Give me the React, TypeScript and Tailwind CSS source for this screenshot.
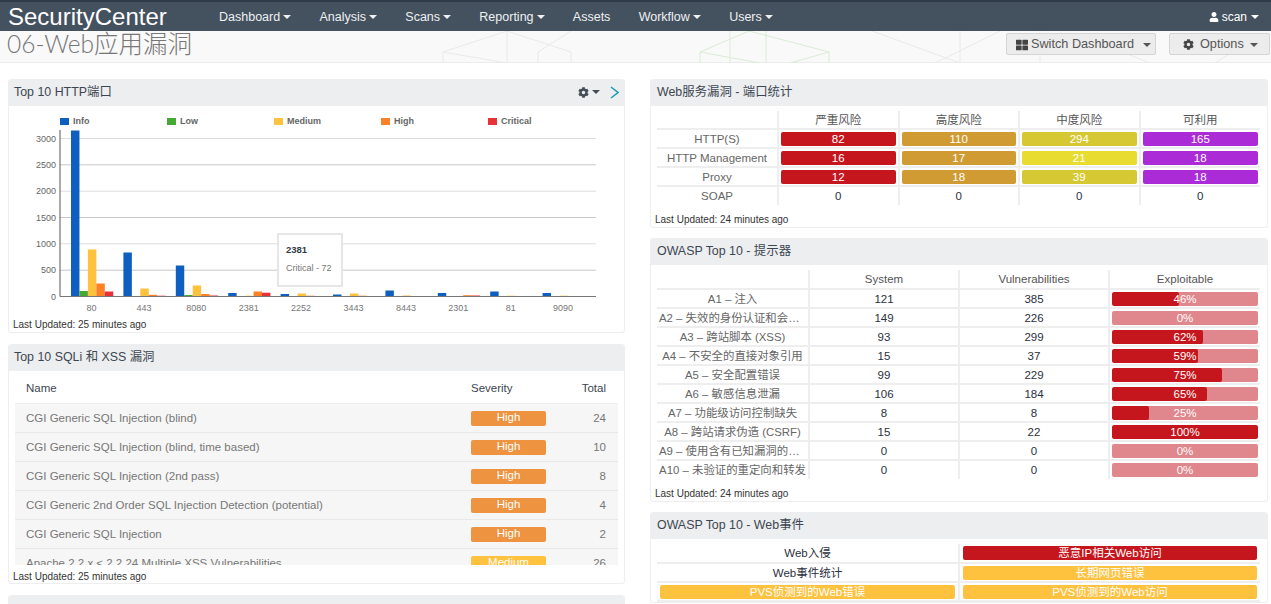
import type { ReactNode } from "react";
import { FaCog, FaThLarge, FaUser } from "react-icons/fa";

const navItems = [
  { label: "Dashboard", caret: true },
  { label: "Analysis", caret: true },
  { label: "Scans", caret: true },
  { label: "Reporting", caret: true },
  { label: "Assets", caret: false },
  { label: "Workflow", caret: true },
  { label: "Users", caret: true },
];

const seriesColors = ["#0f5fc0", "#46a935", "#fec23f", "#fd8127", "#e8323a"];
const legend = ["Info", "Low", "Medium", "High", "Critical"];
const legendX = [60, 167, 274, 381, 488];
const yTicks = ["3000", "2500", "2000", "1500", "1000", "500", "0"];
const tickY = [138.5, 164.8, 191.2, 217.5, 243.8, 270.2, 296.5];

// bar heights in px, order matches the legend
const ports = [
  { port: "80", bars: [166, 5.5, 47, 13, 5] },
  { port: "443", bars: [44, 0, 8, 1.7, 0.8] },
  { port: "8080", bars: [31, 1.5, 11, 2.5, 1] },
  { port: "2381", bars: [3.5, 0.5, 0.8, 5, 3.8] },
  { port: "2252", bars: [2.5, 0, 3, 0.8, 0.3] },
  { port: "3443", bars: [2, 0, 3, 0.8, 0.5] },
  { port: "8443", bars: [6, 0, 1, 0, 0] },
  { port: "2301", bars: [3.5, 0, 0, 1.3, 1] },
  { port: "81", bars: [5, 0, 0.8, 0, 0] },
  { port: "9090", bars: [3.5, 0, 0.8, 0, 0] },
];

const serviceRows = [
  { name: "HTTP(S)", cells: ["82", "110", "294", "165"], medium: "bg-[#d6c832]" },
  { name: "HTTP Management", cells: ["16", "17", "21", "18"], medium: "bg-[#e8dc30]" },
  { name: "Proxy", cells: ["12", "18", "39", "18"], medium: "bg-[#d6c832]" },
];

const owaspRows = [
  { name: "A1 – 注入", system: 121, vulns: 385, pct: 46 },
  { name: "A2 – 失效的身份认证和会话管理", system: 149, vulns: 226, pct: 0 },
  { name: "A3 – 跨站脚本 (XSS)", system: 93, vulns: 299, pct: 62 },
  { name: "A4 – 不安全的直接对象引用", system: 15, vulns: 37, pct: 59 },
  { name: "A5 – 安全配置错误", system: 99, vulns: 229, pct: 75 },
  { name: "A6 – 敏感信息泄漏", system: 106, vulns: 184, pct: 65 },
  { name: "A7 – 功能级访问控制缺失", system: 8, vulns: 8, pct: 25 },
  { name: "A8 – 跨站请求伪造 (CSRF)", system: 15, vulns: 22, pct: 100 },
  { name: "A9 – 使用含有已知漏洞的组件", system: 0, vulns: 0, pct: 0 },
  { name: "A10 – 未验证的重定向和转发", system: 0, vulns: 0, pct: 0 },
];

const sqlRows = [
  { name: "CGI Generic SQL Injection (blind)", severity: "High", total: 24 },
  { name: "CGI Generic SQL Injection (blind, time based)", severity: "High", total: 10 },
  { name: "CGI Generic SQL Injection (2nd pass)", severity: "High", total: 8 },
  { name: "CGI Generic 2nd Order SQL Injection Detection (potential)", severity: "High", total: 4 },
  { name: "CGI Generic SQL Injection", severity: "High", total: 2 },
  { name: "Apache 2.2.x < 2.2.24 Multiple XSS Vulnerabilities", severity: "Medium", total: 26 },
];

function Caret({ className }: { className: string }) {
  return <span className={`inline-block h-0 w-0 border-x-[4px] border-t-[4px] border-x-transparent ${className}`} />;
}

function Panel({ title, action, children, right }: { title: string; action?: ReactNode; children?: ReactNode; right?: boolean }) {
  return (
    <section className="rounded-[3px] border-x border-b border-[#eeeeee] bg-white">
      <div
        className={`flex h-[27px] items-center justify-between rounded-t-[3px] bg-[#eceef0] pb-px pr-[5px] text-[12.4px] text-[#3d4650] ${
          right ? "pl-[6px]" : "pl-[5px]"
        }`}
      >
        <span>{title}</span>
        {action}
      </div>
      {children}
    </section>
  );
}

function Updated({ minutes, className }: { minutes: number; className: string }) {
  return <p className={`text-[10px] leading-none text-[#333333] ${className}`}>Last Updated: {minutes} minutes ago</p>;
}

function Pill({ color, children }: { color: string; children: ReactNode }) {
  return (
    <div className={`flex h-[14px] items-center justify-center rounded-[2px] text-[11.5px] leading-[14px] text-white ${color}`}>
      {children}
    </div>
  );
}

function PortChart() {
  return (
    <div className="relative h-[207px]">
      <svg width="615" height="207" viewBox="9 106 615 207" className="block">
        {legend.map((name, i) => (
          <g key={name}>
            <rect x={legendX[i]} y={118} width={9} height={7} fill={seriesColors[i]} />
            <text x={legendX[i] + 13} y={124} fontSize="9" fontWeight="700" fill="#666666">
              {name}
            </text>
          </g>
        ))}
        {yTicks.map((tick, i) => (
          <g key={tick}>
            {i < 6 && <line x1={60} x2={596} y1={tickY[i]} y2={tickY[i]} stroke={i % 2 === 0 ? "#dddddd" : "#c8c8c8"} />}
            <text x={56} y={tickY[i] + 3} fontSize="9" fill="#666666" textAnchor="end">
              {tick}
            </text>
          </g>
        ))}
        {ports.map((group, g) => (
          <g key={group.port}>
            {group.bars.map((h, s) =>
              h > 0 ? (
                <rect key={s} x={71 + 52.4 * g + 8.45 * s} y={296.5 - h} width={8.45} height={h} fill={seriesColors[s]} />
              ) : null
            )}
            <text x={91.5 + 52.4 * g} y={311} fontSize="9" fill="#777777" textAnchor="middle">
              {group.port}
            </text>
          </g>
        ))}
        <line x1={60} x2={60} y1={130} y2={296.5} stroke="#555555" />
        <line x1={60} x2={596} y1={296.5} y2={296.5} stroke="#777777" />
      </svg>
      <div className="absolute left-[268px] top-[127px] h-[54px] w-[66px] border-2 border-[#e6e6e6] bg-white pl-[7px] pt-[10px]">
        <p className="text-[9.5px] font-bold leading-none text-[#333d47]">2381</p>
        <p className="mt-[9px] text-[9px] leading-none text-[#777777]">Critical - 72</p>
      </div>
    </div>
  );
}

function ServiceTable() {
  const th = "h-[18px] border-l-2 border-[#eeeeee] text-center text-[11.5px] font-normal leading-[14px] text-[#555555]";
  const td = "h-[19px] border-l-2 border-t-2 border-[#eeeeee] px-[2px] text-center text-[11.5px] leading-[14px] text-[#2b3040]";
  const label = "h-[19px] border-t-2 border-[#eeeeee] text-center text-[11.5px] leading-[14px] text-[#666666]";
  return (
    <table className="ml-[6px] mt-[5px] w-[603px] table-fixed">
      <thead>
        <tr>
          <th className="h-[18px] w-[121px]" />
          <th className={th}>严重风险</th>
          <th className={th}>高度风险</th>
          <th className={th}>中度风险</th>
          <th className={th}>可利用</th>
        </tr>
      </thead>
      <tbody>
        {serviceRows.map((row) => (
          <tr key={row.name}>
            <td className={label}>{row.name}</td>
            <td className={td}><Pill color="bg-[#c5161d]">{row.cells[0]}</Pill></td>
            <td className={td}><Pill color="bg-[#d09b33]">{row.cells[1]}</Pill></td>
            <td className={td}><Pill color={row.medium}>{row.cells[2]}</Pill></td>
            <td className={td}><Pill color="bg-[#ab2bd6]">{row.cells[3]}</Pill></td>
          </tr>
        ))}
        <tr>
          <td className={label}>SOAP</td>
          {[0, 1, 2, 3].map((i) => (
            <td key={i} className={td}>0</td>
          ))}
        </tr>
      </tbody>
    </table>
  );
}

function OwaspTable() {
  const th = "h-[19px] border-l-2 border-[#eeeeee] text-center text-[11.5px] font-normal leading-[14px] text-[#555555]";
  const td = "h-[19px] border-l-2 border-t-2 border-[#eeeeee] text-center text-[11.5px] leading-[14px] text-[#2b3040]";
  return (
    <table className="ml-[6px] mt-[5px] w-[603px] table-fixed">
      <thead>
        <tr>
          <th className="h-[19px] w-[152px]" />
          <th className={`${th} w-[150px]`}>System</th>
          <th className={`${th} w-[150px]`}>Vulnerabilities</th>
          <th className={th}>Exploitable</th>
        </tr>
      </thead>
      <tbody>
        {owaspRows.map((row) => (
          <tr key={row.name}>
            <td className="h-[19px] max-w-0 truncate border-t-2 border-[#eeeeee] px-[2px] text-center text-[11.4px] leading-[14px] text-[#666666]">
              {row.name}
            </td>
            <td className={td}>{row.system}</td>
            <td className={td}>{row.vulns}</td>
            <td className={`${td} px-[2px]`}>
              <div className="relative h-[14px] overflow-hidden rounded-[2px] bg-[#e0868d]">
                <div className="h-full rounded-[2px] bg-[#c5161d]" style={{ width: `${row.pct}%` }} />
                <span className="absolute inset-0 text-center text-[11.5px] leading-[14px] text-white">{row.pct}%</span>
              </div>
            </td>
          </tr>
        ))}
      </tbody>
    </table>
  );
}

function SqlTable() {
  return (
    <div className="mx-[6px] h-[194px] overflow-hidden">
      <div className="grid h-[33px] grid-cols-[456px_75px_72px] items-center border-b border-[#eeeeee] pt-[3px] text-[11.5px] text-[#3d4650]">
        <span className="pl-[11px]">Name</span>
        <span>Severity</span>
        <span className="pr-[12px] text-right">Total</span>
      </div>
      {sqlRows.map((row) => (
        <div
          key={row.name}
          className="grid h-[29px] grid-cols-[456px_75px_72px] items-center border-b border-[#e8e8e8] bg-[#f6f6f6] text-[11.5px] text-[#777777]"
        >
          <span className="pl-[11px] pt-px">{row.name}</span>
          <span
            className={`flex h-[15px] items-center justify-center rounded-[2px] text-[11.5px] text-white ${
              row.severity === "High" ? "bg-[#ee9340]" : "bg-[#fec23f]"
            }`}
          >
            {row.severity}
          </span>
          <span className="pr-[12px] pt-px text-right">{row.total}</span>
        </div>
      ))}
    </div>
  );
}

function WebEvents() {
  const cell = "h-[19px] border-b-2 border-[#eeeeee] px-[3px] text-center text-[11.5px] leading-[14px] text-[#2b3040]";
  return (
    <table className="ml-[6px] mt-[5px] w-[603px] table-fixed">
      <tbody>
        <tr>
          <td className={`${cell} w-[302px]`}>Web入侵</td>
          <td className={`${cell} border-l-2`}><Pill color="bg-[#c5161d]">恶意IP相关Web访问</Pill></td>
        </tr>
        <tr>
          <td className={cell}>Web事件统计</td>
          <td className={`${cell} border-l-2`}><Pill color="bg-[#fec23f]">长期网页错误</Pill></td>
        </tr>
        <tr>
          <td className={cell}><Pill color="bg-[#fec23f]">PVS侦测到的Web错误</Pill></td>
          <td className={`${cell} border-l-2`}><Pill color="bg-[#fec23f]">PVS侦测到的Web访问</Pill></td>
        </tr>
      </tbody>
    </table>
  );
}

function HeaderPattern() {
  return (
    <svg className="pointer-events-none absolute inset-0" width="1271" height="32" fill="none">
      <g stroke="#e9e9e9">
        <path d="M443 32V21L507 0M507 0V32M443 21L507 32M507 0L571 21V32M538 32V21L571 0" />
        <path d="M872 0L960 32M960 0V32M1000 0L935 32M1040 0V32M1095 10L1150 32M1215 32L1250 10" />
      </g>
      <g stroke="#d9ecd4">
        <path d="M700 32V21L749 0L829 21V32M730 0V32M766 0V32M700 21L760 32M829 21L790 32" />
      </g>
    </svg>
  );
}

export default function App() {
  return (
    <div className="h-[604px] overflow-hidden bg-white [font-family:Liberation_Sans,Noto_Sans_CJK_SC,sans-serif]">
      <header className="flex h-[31px] items-center border-t-2 border-[#2f3b47] bg-[#44515f] pl-[8px] pr-[12px] text-white">
        <span className="w-[211px] text-[24px] leading-none">SecurityCenter</span>
        <nav className="mt-px flex gap-[28.3px] text-[12.5px] text-[#eef0f2]">
          {navItems.map((item) => (
            <span key={item.label} className="flex items-center gap-[3px]">
              {item.label}
              {item.caret && <Caret className="border-t-[#eef0f2]" />}
            </span>
          ))}
        </nav>
        <span className="ml-auto flex items-center gap-[3px] text-[12px]">
          <FaUser className="h-[10px] w-[10px]" />
          scan
          <Caret className="ml-[1px] border-t-white" />
        </span>
      </header>

      <div className="relative flex h-[32px] items-start justify-between border-b border-[#ececec] bg-[#f9f9f9] pl-[7px] pr-px">
        <HeaderPattern />
        <h1 className="relative text-[24.5px] font-light leading-[26px] text-[#777777] [font-family:Lato,Noto_Sans_CJK_SC,sans-serif]">
          06-Web应用漏洞
        </h1>
        <div className="relative mt-[2px] flex gap-[13px] text-[12.7px] text-[#555555]">
          <button className="flex h-[22px] w-[150px] items-center justify-start gap-[3px] rounded-[2px] border border-[#d4d4d4] bg-[#ececec] pl-[9px] pt-px">
            <FaThLarge className="h-[12px] w-[12px] text-[#444444]" />
            Switch Dashboard
            <Caret className="ml-[6px] border-t-[#555555]" />
          </button>
          <button className="flex h-[22px] w-[101px] items-center justify-start gap-[6px] rounded-[2px] border border-[#d4d4d4] bg-[#ececec] pl-[13px] pt-px">
            <FaCog className="h-[11px] w-[11px] text-[#444444]" />
            Options
            <Caret className="border-t-[#555555]" />
          </button>
        </div>
      </div>

      <main className="flex gap-[25px] pl-[8px] pt-[16px]">
        <div className="flex w-[617px] flex-none flex-col gap-[11px]">
          <Panel
            title="Top 10 HTTP端口"
            action={
              <span className="flex items-center gap-[3px] text-[#444c55]">
                <FaCog className="h-[11px] w-[11px]" />
                <Caret className="border-t-[#444c55]" />
                <svg width="9" height="13" viewBox="0 0 9 13" fill="none" className="ml-[7px]">
                  <path d="M1 1L8 6.5L1 12" stroke="#1a9cb0" strokeWidth="1.5" />
                </svg>
              </span>
            }
          >
            <PortChart />
            <Updated minutes={25} className="h-[19px] pl-[4px] pt-[7px]" />
          </Panel>
          <Panel title="Top 10 SQLi 和 XSS 漏洞">
            <SqlTable />
            <Updated minutes={25} className="h-[18px] pl-[4px] pt-[7px]" />
          </Panel>
          <Panel title="" />
        </div>

        <div className="flex w-[618px] flex-none flex-col gap-[10px]">
          <Panel right title="Web服务漏洞 - 端口统计">
            <ServiceTable />
            <Updated minutes={24} className="h-[22px] pl-[4px] pt-[10px]" />
          </Panel>
          <Panel right title="OWASP Top 10 - 提示器">
            <OwaspTable />
            <Updated minutes={24} className="h-[22px] pl-[4px] pt-[10px]" />
          </Panel>
          <Panel right title="OWASP Top 10 - Web事件">
            <WebEvents />
          </Panel>
        </div>
      </main>
    </div>
  );
}
